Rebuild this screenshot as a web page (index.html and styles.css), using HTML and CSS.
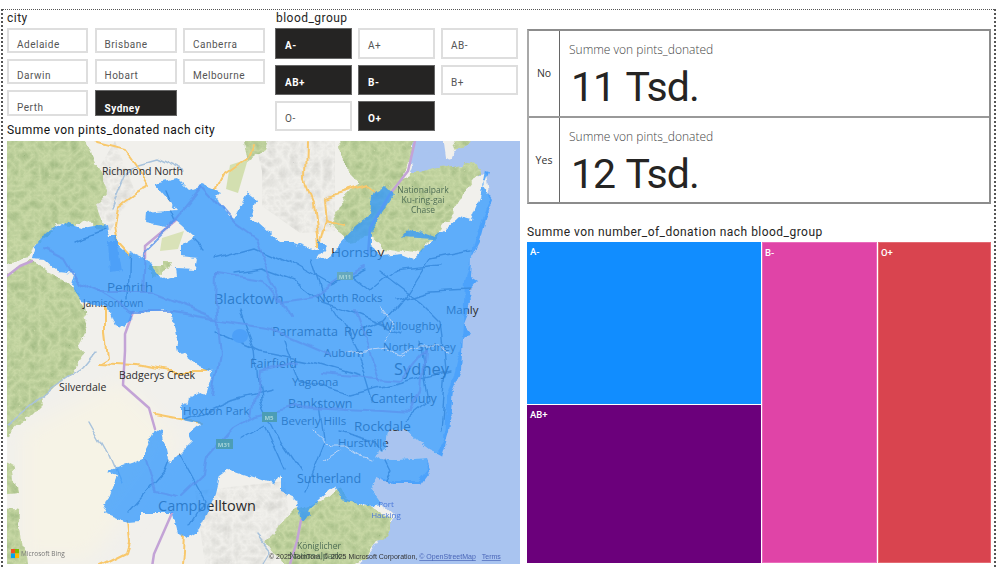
FILE: index.html
```html
<!DOCTYPE html>
<html lang="en">
<head>
<meta charset="UTF-8">
<title>Blood donations</title>
<link rel="stylesheet" href="styles.css">
</head>
<body>
<div class="report">
	<div class="left">
		<div class="slicers">
			<div class="slicer">
				<div class="title">city</div>
				<div class="city-grid">
					<span class="btn">Adelaide</span>
					<span class="btn">Brisbane</span>
					<span class="btn">Canberra</span>
					<span class="btn">Darwin</span>
					<span class="btn">Hobart</span>
					<span class="btn">Melbourne</span>
					<span class="btn">Perth</span>
					<span class="btn on">Sydney</span>
				</div>
			</div>
			<div class="slicer">
				<div class="title">blood_group</div>
				<div class="blood-grid">
					<span class="btn on">A-</span>
					<span class="btn">A+</span>
					<span class="btn">AB-</span>
					<span class="btn on">AB+</span>
					<span class="btn on">B-</span>
					<span class="btn">B+</span>
					<span class="btn">O-</span>
					<span class="btn on">O+</span>
				</div>
			</div>
		</div>
		<div class="title map-title">Summe von pints_donated nach city</div>
		<svg class="map" viewBox="7 140 513 423">
			<defs>
				<polygon id="areaShape" points="32,257 35,245 46,231 62,221 84,228 106,224 108,235 118,235 118,245 130,255 132,251 145,257 150,263 162,278 177,275 176,267 196,268 198,257 181,255 181,245 195,236 182,224 176,219 165,226 145,222 146,212 177,209 154,182 177,177 189,189 203,184 220,191 215,196 233,219 247,192 257,200 250,218 260,223 280,241 294,241 318,250 318,239 326,245 316,259 329,255 353,228 370,214 372,197 375,191 385,186 394,194 382,213 370,231 370,245 382,255 402,253 414,258 432,238 402,236 410,227 434,236 444,230 459,216 471,219 480,197 483,180 485,169 488,170 483,184 493,199 486,218 480,241 471,258 470,275 478,280 470,289 471,302 463,322 471,334 463,336 461,370 453,390 449,431 442,455 429,448 419,441 405,428 388,431 385,448 375,455 380,458 392,459 427,457 431,468 420,483 392,483 376,476 372,490 382,503 368,505 341,499 334,485 307,509 311,516 301,519 296,499 280,492 280,473 274,483 230,468 220,475 216,492 199,529 188,536 177,532 172,512 139,512 139,521 128,522 103,512 117,475 108,470 144,458 144,451 155,429 162,431 169,463 192,440 189,433 201,423 182,419 182,404 199,392 206,394 213,370 199,365 179,350 171,309 133,311 127,327 115,324 108,306 81,300 71,285 74,272 57,270 44,258"/>
				<clipPath id="areaClip"><use href="#areaShape"/></clipPath>
				<!-- frayed edges for the shape and the coast -->
				<filter id="rough" x="-3%" y="-3%" width="106%" height="106%">
					<feTurbulence type="fractalNoise" baseFrequency=".09" numOctaves="4" seed="5" result="n"/>
					<feDisplacementMap in="SourceGraphic" in2="n" scale="7" xChannelSelector="R" yChannelSelector="G"/>
				</filter>
				<!-- bends for roads -->
				<filter id="wiggle" filterUnits="userSpaceOnUse" x="7" y="140" width="513" height="423">
					<feTurbulence type="fractalNoise" baseFrequency=".035" numOctaves="2" seed="2" result="n"/>
					<feDisplacementMap in="SourceGraphic" in2="n" scale="12" xChannelSelector="R" yChannelSelector="G"/>
				</filter>
				<!-- hill shading on the forest -->
				<filter id="forest" filterUnits="userSpaceOnUse" x="7" y="140" width="513" height="423" color-interpolation-filters="sRGB">
					<feTurbulence type="fractalNoise" baseFrequency=".05" numOctaves="4" seed="3" result="n"/>
					<feDisplacementMap in="SourceGraphic" in2="n" scale="16" xChannelSelector="R" yChannelSelector="G" result="shape"/>
					<feTurbulence type="turbulence" baseFrequency=".1" numOctaves="3" seed="8" result="t"/>
					<feColorMatrix in="t" type="matrix" values="0 0 0 0 .58  0 0 0 0 .69  0 0 0 0 .47  .9 0 0 0 -.04" result="shade"/>
					<feComposite in="shade" in2="shape" operator="in" result="sh"/>
					<feMerge><feMergeNode in="shape"/><feMergeNode in="sh"/></feMerge>
				</filter>
				<!-- grey relief on open land -->
				<filter id="hill" filterUnits="userSpaceOnUse" x="7" y="140" width="513" height="423" color-interpolation-filters="sRGB">
					<feTurbulence type="turbulence" baseFrequency=".09" numOctaves="3" seed="11" result="t"/>
					<feColorMatrix in="t" type="matrix" values="0 0 0 0 .74  0 0 0 0 .74  0 0 0 0 .72  1 0 0 0 -.05" result="shade"/>
					<feComposite in="shade" in2="SourceGraphic" operator="in"/>
					<feGaussianBlur stdDeviation=".5"/>
				</filter>
				<filter id="soft" x="-20%" y="-20%" width="140%" height="140%">
					<feGaussianBlur stdDeviation="10"/>
				</filter>
			</defs>
			<!-- water -->
			<rect x="7" y="140" width="513" height="423" fill="#a9c4f0"/>
			<!-- land -->
			<g filter="url(#rough)">
				<polygon fill="#f1f0ec" points="0,130 416,130 408,165 430,158 440,170 475,162 480,175 486,172 490,200 480,225 465,280 462,340 455,370 446,400 444,440 436,452 419,441 405,428 388,431 385,448 375,455 380,458 392,459 427,457 428,468 418,480 392,480 376,476 372,490 382,503 395,515 372,549 351,575 0,575"/>
				<polygon fill="#f1f0ec" points="443,135 462,135 452,158 446,156"/>
			</g>
			<polygon fill="#f6f3e6" filter="url(#soft)" points="20,430 120,380 180,440 90,560 20,560"/>
			<g filter="url(#hill)" opacity=".6">
				<polygon points="255,140 335,140 335,230 300,232 262,205 262,170"/>
				<polygon points="195,490 285,480 292,540 270,563 205,563"/>
				<polygon points="85,190 115,140 135,190 110,230"/>
			</g>
			<!-- forest -->
			<g fill="#c9d9a6" filter="url(#forest)">
				<polygon points="0,130 85,130 92,155 110,190 96,205 104,226 62,221 35,245 30,258 0,262"/>
				<polygon points="0,278 32,262 57,272 72,290 82,302 88,325 78,345 84,352 70,372 50,392 30,412 12,432 0,440"/>
				<polygon points="0,458 14,465 18,488 0,490"/>
				<polygon points="0,510 18,512 22,540 26,570 0,570"/>
				<polygon points="267,539 297,509 320,500 338,485 345,498 368,505 395,515 372,549 351,570 290,570"/>
				<polygon points="340,130 416,130 408,165 400,178 430,160 438,168 452,167 475,162 478,172 463,190 455,213 440,233 420,253 383,247 370,237 350,240 330,225 345,195 360,185 345,170"/>
				<polygon points="245,130 272,130 265,150 250,160"/>
				<polygon points="453,135 473,135 470,148 458,152"/>
				<polygon points="150,262 172,262 165,276 150,273"/>
			</g>
			<polygon fill="#d9e2b8" points="162,237 184,230 178,248 160,250"/>
			<polygon fill="#d3dfb0" points="230,164 248,158 238,192 226,188"/>
			<polygon fill="#a9c4f0" filter="url(#rough)" points="418,150 436,152 440,166 420,172 410,172"/>
			<!-- rivers -->
			<g class="river" filter="url(#wiggle)">
				<polyline points="7,424 51,387 81,367 95,350"/>
				<polyline points="113,205 130,165 155,158 185,172"/>
				<polyline points="90,420 108,452 120,480"/>
				<polyline points="258,535 270,550 262,563"/>
			</g>
			<!-- minor roads, seen through the shape -->
			<g clip-path="url(#areaClip)">
				<g class="minor" filter="url(#wiggle)">
					<polyline points="205,250 180,225 165,190"/>
					<polyline points="215,258 255,247 290,262 330,285 365,268"/>
					<polyline points="235,272 262,268 295,280 320,300 350,310 400,330"/>
					<polyline points="240,310 255,350 260,400 280,440 300,470"/>
					<polyline points="310,260 320,290 345,330 360,360 372,400"/>
					<polyline points="380,270 420,300 440,320 445,370 440,430"/>
					<polyline points="75,240 108,228 130,240 128,300"/>
					<polyline points="470,250 430,258 410,290 385,320 360,330"/>
					<polyline points="285,340 300,380 350,395 410,380 450,370"/>
					<polyline points="215,330 260,350 310,360 360,375"/>
					<polyline points="183,420 230,400 270,390"/>
					<polyline points="320,400 325,440 305,490"/>
					<polyline points="175,445 205,500 190,525"/>
					<polyline points="130,510 165,470 175,445"/>
					<polyline points="395,300 430,290 468,288"/>
					<polyline points="340,430 375,440 390,470 380,490"/>
					<polyline points="240,440 265,425 285,470"/>
					<polyline points="345,270 370,290 395,270 440,265"/>
					<polyline points="420,340 430,400 405,420"/>
				</g>
			</g>
			<!-- main roads -->
			<g class="road" filter="url(#wiggle)">
				<polyline points="93,140 125,148 135,162 150,184 135,192 118,204 115,224 118,241 130,255"/>
				<polyline points="253,143 247,157 223,174 216,187"/>
				<polyline points="307,140 306,181 314,201 319,245"/>
				<polyline points="319,245 326,219 324,197 367,184 376,190"/>
				<polyline points="326,219 345,224"/>
				<polyline points="105,309 105,330 108,356 98,362 135,364 169,370 209,370"/>
				<polyline points="154,414 201,423"/>
				<polyline points="184,536 182,566"/>
				<polyline points="128,522 130,543 127,553 101,566"/>
			</g>
			<g class="motorway">
				<polyline points="415,140 408,170 390,193 370,227 368,253"/>
				<polyline points="7,275 20,265 32,260"/>
				<polyline points="145,257 145,245 176,219"/>
				<polyline points="133,311 125,333 125,350 123,384 149,407 155,428"/>
				<polyline points="172,512 154,553 152,566"/>
				<polyline points="301,519 297,540 290,563"/>
			</g>
			<!-- labels under the shape -->
			<g class="places">
				<text class="s11" x="102" y="174">Richmond North</text>
				<text class="s14" x="331" y="256">Hornsby</text>
				<text class="s14" x="107" y="291">Penrith</text>
				<text class="s10" x="83" y="306">Jamisontown</text>
				<text class="s15" x="214" y="303">Blacktown</text>
				<text class="s12" x="317" y="301">North Rocks</text>
				<text class="s13" x="272" y="335">Parramatta</text>
				<text class="s13" x="344" y="335">Ryde</text>
				<text class="s12" x="382" y="329">Willoughby</text>
				<text class="s12" x="446" y="313">Manly</text>
				<text class="s12" x="383" y="350">North Sydney</text>
				<text class="s12" x="324" y="356">Auburn</text>
				<text class="s13" x="250" y="367">Fairfield</text>
				<text class="s12" x="292" y="385">Yagoona</text>
				<text class="s17" x="394" y="374">Sydney</text>
				<text class="s13" x="371" y="402">Canterbury</text>
				<text class="s13" x="288" y="407">Bankstown</text>
				<text class="s12" x="183" y="414">Hoxton Park</text>
				<text class="s12" x="281" y="424">Beverly Hills</text>
				<text class="s14" x="354" y="430">Rockdale</text>
				<text class="s12" x="338" y="446">Hurstville</text>
				<text class="s13" x="297" y="482">Sutherland</text>
				<text class="s15" x="158" y="510">Campbelltown</text>
				<text class="s11" x="119" y="378">Badgerys Creek</text>
				<text class="s11" x="59" y="390">Silverdale</text>
			</g>
			<!-- donated area -->
			<use href="#areaShape" class="area" filter="url(#rough)"/>
			<polygon class="lake" filter="url(#rough)" points="108,240 117,240 122,270 110,272"/>
			<ellipse class="lake" cx="240" cy="335" rx="8" ry="7"/>
			<!-- highways over the shape -->
			<g class="highway" filter="url(#wiggle)">
				<polyline points="203,186 176,219 145,250 143,290"/>
				<polyline points="203,186 236,223 257,238 274,285 291,316"/>
				<polyline points="44,248 64,258 78,282 101,292 132,311 172,311 220,319 270,327 331,353"/>
				<polyline points="182,495 203,475 206,458 233,428 257,414 297,404 412,411 422,390 425,350"/>
				<polyline points="216,272 264,279 280,300 314,295 338,278 365,265"/>
				<polyline points="216,272 215,299 220,356 213,395"/>
				<polyline points="145,458 155,490 178,495"/>
				<polyline points="100,292 150,292 215,317"/>
				<polyline points="253,414 260,370 300,360"/>
				<polyline points="320,373 400,380 425,350"/>
				<polyline points="355,310 380,380"/>
			</g>
			<!-- harbour and rivers over the shape -->
			<g class="harbour" filter="url(#rough)">
				<polyline points="385,347 400,355 420,345 440,345 450,352"/>
				<polyline points="345,352 365,350 385,347"/>
				<polyline points="312,428 330,445 345,445 360,455 372,458"/>
				<polyline points="322,460 340,450"/>
				<polyline points="380,305 395,325 385,340"/>
			</g>
			<rect x="337" y="271" width="16" height="8" fill="#66a9bd"/>
			<rect x="262" y="411" width="15" height="10" fill="#4c9db5"/>
			<rect x="216" y="438" width="17" height="10" fill="#4c9db5"/>
			<g class="shield">
				<text x="345" y="278">M11</text>
				<text x="269" y="419">M5</text>
				<text x="224" y="446">M31</text>
			</g>
			<g class="park">
				<text x="423" y="192">Nationalpark</text>
				<text x="423" y="202">Ku-ring-gai</text>
				<text x="423" y="212">Chase</text>
				<text x="319" y="548">Königlicher</text>
				<text x="315" y="558">Nationalpark</text>
			</g>
			<g class="port">
				<text x="386" y="506">Port</text>
				<text x="386" y="517">Hacking</text>
			</g>
			<!-- bing logo -->
			<rect x="11" y="548" width="4" height="4.5" fill="#f25022"/>
			<rect x="15" y="548" width="4" height="4.5" fill="#7fba00"/>
			<rect x="11" y="552.5" width="4" height="4.5" fill="#00a4ef"/>
			<rect x="15" y="552.5" width="4" height="4.5" fill="#ffb900"/>
			<text class="bing" x="21" y="555">Microsoft Bing</text>
			<text class="credit" x="269" y="558">© 2025 TomTom, © 2025 Microsoft Corporation, <tspan class="credit-link">© OpenStreetMap</tspan><tspan class="credit-link" dx="6">Terms</tspan></text>
		</svg>
	</div>
	<div class="right">
		<div class="cards">
			<div class="card-row">
				<div class="card-key">No</div>
				<div class="card">
					<div class="card-label">Summe von pints_donated</div>
					<div class="card-value">11 Tsd.</div>
				</div>
			</div>
			<div class="card-row">
				<div class="card-key">Yes</div>
				<div class="card">
					<div class="card-label">Summe von pints_donated</div>
					<div class="card-value">12 Tsd.</div>
				</div>
			</div>
		</div>
		<div class="title tree-title">Summe von number_of_donation nach blood_group</div>
		<div class="tree">
			<div class="tree-col first">
				<div class="cell blue">A-</div>
				<div class="cell purple">AB+</div>
			</div>
			<div class="cell pink">B-</div>
			<div class="cell red">O+</div>
		</div>
	</div>
</div>
</body>
</html>
```

FILE: styles.css
```css
html, body {
	margin: 0;
	height: 100%;
	overflow: hidden;
	background: #fff;
}
body {
	font-family: Roboto, "Liberation Sans", sans-serif;
	color: #252423;
}
.report {
	display: flex;
	gap: 8px;
	box-sizing: border-box;
	width: 995px;
	height: 558px;
	margin: 9px 0 0 1px;
	padding: 0 3px 0 4px;
	border: 2px dotted #555;
	border-width: 1.5px 2px 0 2px;
}
.left {
	display: flex;
	flex-direction: column;
	width: 512px;
}
.right {
	display: flex;
	flex-direction: column;
	width: 464px;
	padding-top: 19px;
}
.slicers {
	display: flex;
	height: 113px;
}
.slicer:first-child {
	width: 268px;
}
.slicer:last-child {
	width: 244px;
}
.title {
	font-size: 12px;
	line-height: 14px;
	letter-spacing: .47px;
	white-space: nowrap;
}
.slicer .title {
	height: 18px;
	padding-top: 1px;
	box-sizing: border-box;
}
.slicer:last-child .title {
	padding-left: 1px;
}
.city-grid {
	display: grid;
	grid-template-columns: 81px 82px 82px;
	grid-template-rows: 25px 25px 26px;
	column-gap: 6.5px;
	row-gap: 6px;
}
.blood-grid {
	display: grid;
	grid-template-columns: 77px 77px 77px;
	grid-template-rows: 31px 30px 30px;
	gap: 6px;
}
.btn {
	display: flex;
	align-items: flex-end;
	box-sizing: border-box;
	padding: 0 0 0 8px;
	border: 2px solid #dedede;
	font-size: 10px;
	line-height: 13px;
	letter-spacing: .5px;
	color: #555;
	background: #fff;
}
.blood-grid .btn {
	align-items: center;
	padding: 4px 0 0 8px;
}
.btn.on {
	border: 1px solid #666;
	padding-left: 9px;
	background: #252423;
	color: #fff;
	font-weight: 700;
}
.blood-grid .btn.on {
	padding-left: 9px;
}
.map-title {
	height: 18px;
	color: #111;
}
.map {
	display: block;
	width: 513px;
	height: 423px;
}
.river polyline, .minor polyline, .road polyline, .motorway polyline, .highway polyline, .harbour polyline {
	fill: none;
	stroke-linejoin: round;
	stroke-linecap: round;
}
.river polyline {
	stroke: #a9c3dc;
	stroke-width: 1.5;
}
.minor polyline {
	stroke: #66768a;
	stroke-width: 1.4;
}
.road polyline {
	stroke: #f8c86c;
	stroke-width: 2;
}
.motorway polyline {
	stroke: #c3a3d6;
	stroke-width: 2.5;
}
.highway polyline {
	stroke: #5b93ee;
	stroke-width: 2;
	opacity: .8;
}
.harbour polyline {
	stroke: #cfdcf4;
	stroke-width: 1;
	opacity: .8;
}
.area {
	fill: #2f97ff;
	opacity: .75;
}
.lake {
	fill: #4da0f8;
}
.places text {
	font-family: "Open Sans", sans-serif;
	fill: #2b2b2b;
}
.s10 { font-size: 10px; }
.s11 { font-size: 10.5px; }
.s12 { font-size: 11.5px; }
.s13 { font-size: 12.5px; }
.s14 { font-size: 13.5px; }
.s15 { font-size: 14.5px; }
.s17 { font-size: 16.5px; }
.shield text {
	font-family: "Open Sans", sans-serif;
	font-size: 6px;
	font-weight: 700;
	fill: #a5d4d8;
	text-anchor: middle;
}
.park text {
	font-family: "Open Sans", sans-serif;
	font-size: 8.5px;
	fill: #4f6e56;
	text-anchor: middle;
}
.port text {
	font-family: "Open Sans", sans-serif;
	font-size: 8px;
	fill: #4a78d8;
	text-anchor: middle;
}
.bing {
	font-family: "Open Sans", sans-serif;
	font-size: 6.5px;
	fill: #777;
}
.credit {
	font-family: "Liberation Sans", sans-serif;
	font-size: 7px;
	fill: #333;
}
.credit-link {
	fill: #4a66b8;
	text-decoration: underline;
}
.cards {
	display: flex;
	flex-direction: column;
	box-sizing: border-box;
	height: 175px;
	border: 2px solid #8c8c8c;
	border-left-color: #a8a8a8;
}
.card-row {
	display: flex;
	flex: 1;
}
.card-row + .card-row {
	border-top: 2px solid #999;
}
.card-key {
	display: flex;
	align-items: center;
	justify-content: center;
	width: 30px;
	font-family: "Open Sans", sans-serif;
	font-size: 10.5px;
	color: #333;
	border-right: 1px solid #666;
}
.card {
	flex: 1;
	padding: 12px 0 0 9px;
}
.card-label {
	font-family: "Open Sans", sans-serif;
	font-weight: 300;
	font-size: 12px;
	line-height: 14px;
	color: #444;
}
.card-value {
	margin-top: 6px;
	padding-left: 2px;
	font-size: 41px;
	line-height: 48px;
	letter-spacing: -1px;
	word-spacing: 2px;
}
.tree-title {
	margin-top: 21px;
	height: 17px;
}
.tree {
	display: flex;
	gap: 1px;
	height: 321px;
}
.tree-col {
	display: flex;
	flex-direction: column;
	gap: 1px;
}
.tree-col.first {
	width: 234px;
}
.tree-col .blue {
	height: 162px;
}
.tree-col .purple {
	flex: 1;
}
.cell {
	box-sizing: border-box;
	padding: 4px 0 0 3px;
	font-size: 9.5px;
	font-weight: 500;
	line-height: 12px;
	color: #fff;
}
.blue {
	background: #118dff;
}
.purple {
	background: #6b007b;
}
.pink {
	width: 115px;
	padding-left: 2px;
	background: #e044a7;
	border: 1px solid #e96cbb;
}
.red {
	width: 113px;
	padding-left: 2px;
	background: #d9444f;
	border: 1px solid #e36a73;
}
```
